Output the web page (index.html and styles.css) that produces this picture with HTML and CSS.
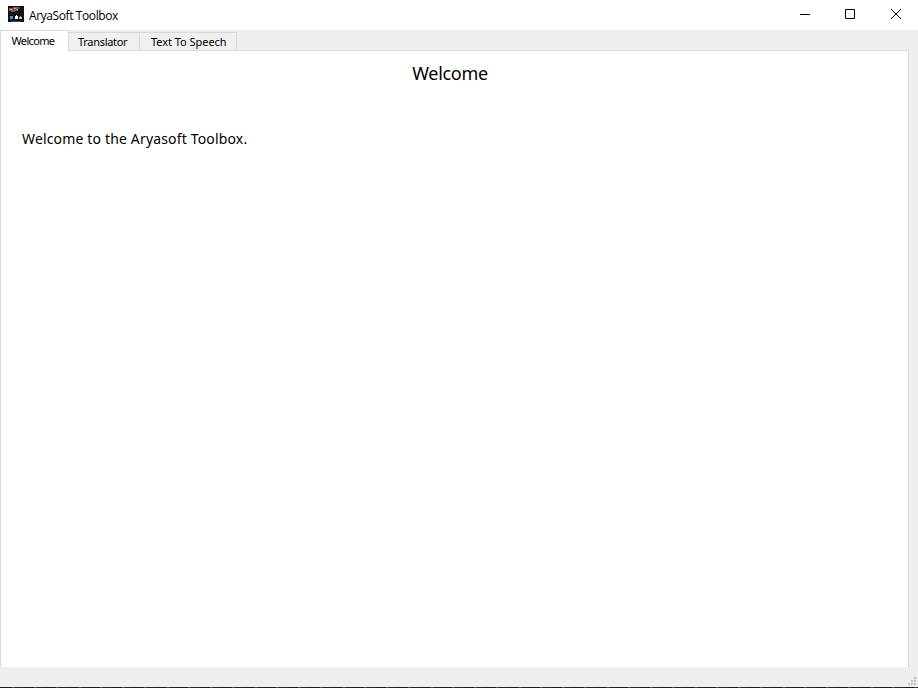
FILE: index.html
```html
<!DOCTYPE html>
<html lang="en">
<head>
<meta charset="utf-8">
<title>AryaSoft Toolbox</title>
<link rel="stylesheet" href="styles.css">
</head>
<body>
<div class="window">
  <header class="titlebar">
    <svg class="app-icon" width="16" height="16" viewBox="0 0 16 16" shape-rendering="crispEdges">
      <path fill="#151012" d="M0 0h16v16H0z"/>
      <path fill="#c83b38" d="M1 2h4v3H1z"/><path fill="#f0a09a" d="M2 3h2v1H2z"/>
      <path fill="#68606a" d="M5 1h5v4H5zM3 5h4v1H3z"/><path fill="#a29aa5" d="M6 2h2v1H6zM8 3h2v1H8z"/>
      <path fill="#873129" d="M10 1h2v2h-2z"/>
      <path fill="#249ee4" d="M2 10h3v3H2z"/>
      <path fill="#fff" d="M7 10h3v3H7zM8 9h1v1H8z"/>
      <path fill="#e6b36a" d="M12 10h1v1h1v2h-3v-2h1z"/>
      <path fill="#4a4648" d="M3 15h10v1H3z"/>
    </svg>
    <span class="title">AryaSoft Toolbox</span>
    <svg class="controls" width="138" height="30" viewBox="0 0 138 30">
      <path d="M20 14.500h10" stroke="#000"/>
      <path d="M65.500 9.500h9v9h-9z" fill="none" stroke="#000"/>
      <path d="M111 9l10 10M121 9l-10 10" stroke="#000"/>
    </svg>
  </header>
  <nav class="tabs">
    <div class="tab active"><span>Welcome</span></div>
    <div class="tab translator"><span>Translator</span></div>
    <div class="tab speech"><span>Text To Speech</span></div>
  </nav>
  <main class="panel">
    <h1>Welcome</h1>
    <p>Welcome to the Aryasoft Toolbox.</p>
  </main>
  <footer class="statusbar">
    <svg width="8" height="8" viewBox="0 0 8 8" shape-rendering="crispEdges">
      <path fill="#bfbfbf" d="M6 0h2v2H6zM3 3h2v2H3zM6 3h2v2H6zM0 6h2v2H0zM3 6h2v2H3zM6 6h2v2H6z"/>
    </svg>
  </footer>
  <div class="edge"></div>
</div>
</body>
</html>
```
FILE: styles.css
```css
* { box-sizing: border-box; }
body { margin: 0; overflow: hidden; color: #000; }
.window {
  width: 918px;
  height: 688px;
  display: grid;
  grid-template-rows: 30px 20px 617px 20px 1px;
  background: #efefef;
}
.titlebar { display: flex; align-items: center; padding-left: 8px; background: #fff; }
.app-icon { margin-top: -2px; }
.title {
  margin: 2px 0 0 5px;
  font: 12px/16px "Open Sans", sans-serif;
  letter-spacing: -0.4px;
}
.controls { margin-left: auto; }
.tabs { display: flex; align-items: flex-end; }
.tab {
  height: 18px;
  border: 1px solid #d9d9d9;
  border-width: 1px 1px 0 0;
  background: #f0f0f0;
  font: 11px/17px "Noto Sans", sans-serif;
  white-space: nowrap;
}
.tab.active {
  z-index: 1;
  width: 69px;
  height: 21px;
  margin-bottom: -1px;
  padding-left: 10.5px;
  border-left-width: 1px;
  background: #fff;
  line-height: 20px;
  letter-spacing: -0.65px;
}
.translator { width: 71px; padding-left: 9px; letter-spacing: -0.3px; }
.speech { width: 97px; padding-left: 11px; letter-spacing: -0.04px; }
.panel {
  width: 909px;
  padding: 10px 8px 0 21px;
  border: 1px solid #d9d9d9;
  border-bottom: 0;
  background: #fff;
  font-family: "Noto Sans", sans-serif;
}
h1 {
  margin: 0 0 42px -22px;
  font-size: 18px;
  font-weight: 400;
  line-height: 24px;
  text-align: center;
  letter-spacing: -0.3px;
}
p { margin: 0; font-size: 14px; line-height: 24px; letter-spacing: 0.16px; }
.statusbar { display: flex; justify-content: flex-end; align-items: flex-end; padding: 0 2px 2px 0; }
.edge { background: repeating-linear-gradient(90deg, #1c1e1c 0 12px, #45483f 12px 15px, #242820 15px 22px); }
```
